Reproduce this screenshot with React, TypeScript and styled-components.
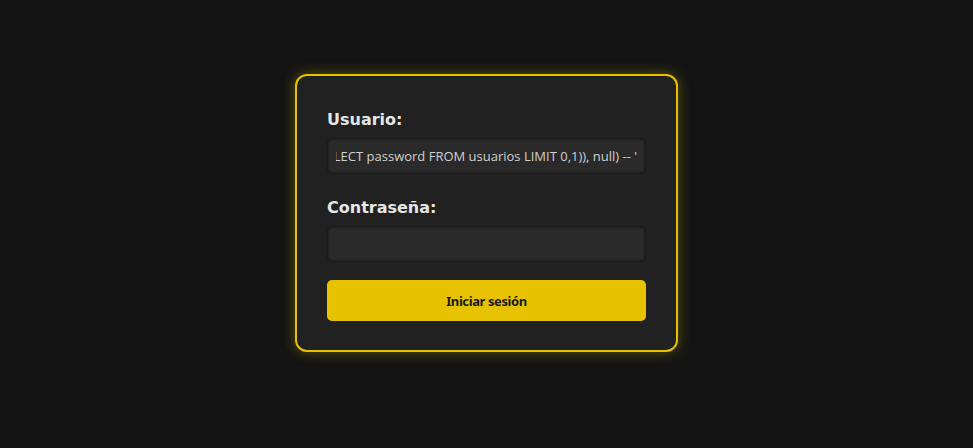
import React, { useEffect, useRef } from "react"
import styled, { createGlobalStyle } from "styled-components"

const GlobalStyle = createGlobalStyle`
  html, body {
    margin: 0;
    padding: 0;
    background: #141414;
  }
  body {
    font-family: "DejaVu Sans", Verdana, sans-serif;
  }
`

const usuarioValue =
  "' OR 1=1 AND extractvalue(1, (SELECT password FROM usuarios LIMIT 0,1)), null) -- '"

export default function App() {
  const userRef = useRef<HTMLInputElement>(null)

  useEffect(() => {
    // the reference shows the end of the long value
    if (userRef.current) userRef.current.scrollLeft = userRef.current.scrollWidth
  }, [])

  return (
    <S.Page>
      <GlobalStyle />
      <S.Card onSubmit={(e) => e.preventDefault()}>
        <S.Field>
          <S.Label htmlFor="usuario">Usuario:</S.Label>
          <S.Input id="usuario" ref={userRef} type="text" defaultValue={usuarioValue} />
        </S.Field>
        <S.Field>
          <S.Label htmlFor="password">Contraseña:</S.Label>
          <S.Input id="password" type="password" />
        </S.Field>
        <S.Button type="submit">Iniciar sesión</S.Button>
      </S.Card>
    </S.Page>
  )
}

const S = {
  Page: styled.div`
    display: flex;
    justify-content: center;
    align-items: flex-start;
    min-height: 100vh;
    box-sizing: border-box;
    padding-top: 74px;
  `,
  Card: styled.form`
    width: 383px;
    box-sizing: border-box;
    display: flex;
    flex-direction: column;
    padding: 34px 30px 29px;
    background: #212121;
    border: 2px solid #e6c200;
    border-radius: 12px;
    box-shadow: 0 0 14px rgba(230, 194, 0, 0.35);
  `,
  Field: styled.div`
    display: flex;
    flex-direction: column;
    gap: 9px;
    & + & {
      margin-top: 24px;
    }
  `,
  Label: styled.label`
    color: #e6e6e6;
    font-family: "DejaVu Sans", Verdana, sans-serif;
    font-weight: bold;
    font-size: 16px;
    line-height: 19px;
  `,
  Input: styled.input`
    height: 36px;
    box-sizing: border-box;
    width: 100%;
    padding: 0 8px;
    background: #2a2a2a;
    border: 1px solid #1b1b1b;
    border-radius: 5px;
    box-shadow: inset 0 0 3px rgba(0, 0, 0, 0.45);
    color: #d0d0d0;
    font-family: "Open Sans", "Noto Sans", sans-serif;
    font-size: 13px;
    outline: none;
  `,
  Button: styled.button`
    height: 41px;
    margin-top: 18px;
    border: none;
    border-radius: 5px;
    background: #e6c200;
    color: #1a1a1a;
    font-family: "Noto Sans", sans-serif;
    font-weight: 700;
    font-size: 13px;
    letter-spacing: -0.4px;
    cursor: pointer;
  `,
}
